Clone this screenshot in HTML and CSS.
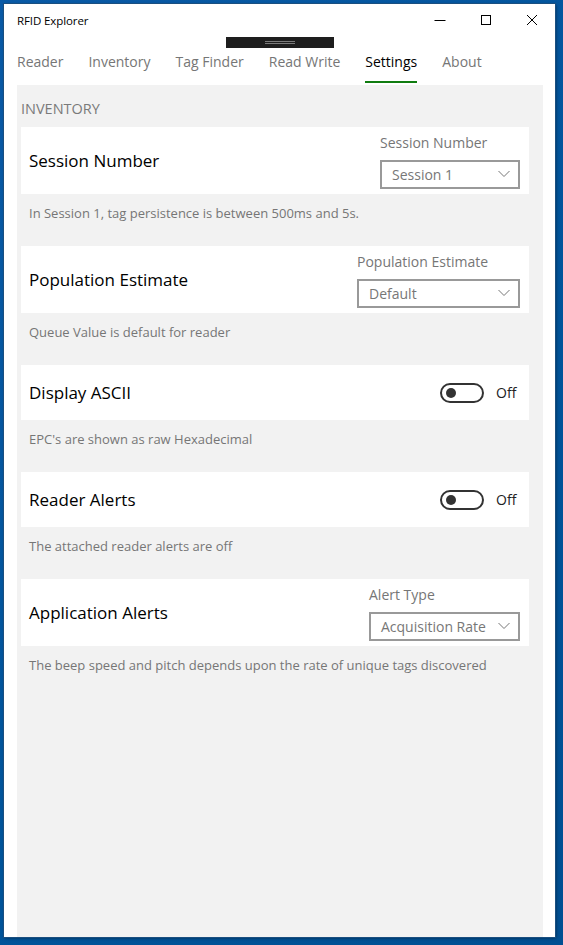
FILE: index.html
```html
<!DOCTYPE html>
<html>
<head>
<meta charset="utf-8">
<link rel="stylesheet" href="styles.css">
</head>
<body>
<div class="window">
  <div class="titlebar">
    <span class="app-title">RFID Explorer</span>
    <div class="caption-buttons">
      <span class="cap-btn"><svg width="12" height="12" viewBox="0 0 12 12"><path d="M0.5 6.5H11.5" stroke="#000" stroke-width="1"/></svg></span>
      <span class="cap-btn"><svg width="12" height="12" viewBox="0 0 12 12"><rect x="1.5" y="1.5" width="9" height="9" fill="none" stroke="#000" stroke-width="1"/></svg></span>
      <span class="cap-btn"><svg width="12" height="12" viewBox="0 0 12 12"><path d="M1 1L11 11M11 1L1 11" stroke="#000" stroke-width="1"/></svg></span>
    </div>
  </div>
  <div class="drag-handle"><span class="grip"></span></div>
  <nav class="tabs">
    <span class="tab">Reader</span>
    <span class="tab">Inventory</span>
    <span class="tab">Tag Finder</span>
    <span class="tab">Read Write</span>
    <span class="tab active">Settings</span>
    <span class="tab">About</span>
  </nav>
  <main class="panel">
    <div class="section-header">INVENTORY</div>

    <div class="card tall">
      <div class="card-title">Session Number</div>
      <div class="field">
        <div class="field-label">Session Number</div>
        <div class="combo w140"><span>Session 1</span><svg class="chev" width="12" height="8" viewBox="0 0 12 8"><path d="M0.5 1L6 6.5L11.5 1" fill="none" stroke="#777" stroke-width="1"/></svg></div>
      </div>
    </div>
    <div class="desc">In Session 1, tag persistence is between 500ms and 5s.</div>

    <div class="card tall">
      <div class="card-title">Population Estimate</div>
      <div class="field">
        <div class="field-label">Population Estimate</div>
        <div class="combo w163"><span>Default</span><svg class="chev" width="12" height="8" viewBox="0 0 12 8"><path d="M0.5 1L6 6.5L11.5 1" fill="none" stroke="#777" stroke-width="1"/></svg></div>
      </div>
    </div>
    <div class="desc">Queue Value is default for reader</div>

    <div class="card">
      <div class="card-title">Display ASCII</div>
      <div class="toggle-wrap"><span class="toggle"><span class="knob"></span></span><span class="toggle-text">Off</span></div>
    </div>
    <div class="desc">EPC's are shown as raw Hexadecimal</div>

    <div class="card">
      <div class="card-title">Reader Alerts</div>
      <div class="toggle-wrap"><span class="toggle"><span class="knob"></span></span><span class="toggle-text">Off</span></div>
    </div>
    <div class="desc">The attached reader alerts are off</div>

    <div class="card tall">
      <div class="card-title">Application Alerts</div>
      <div class="field">
        <div class="field-label">Alert Type</div>
        <div class="combo w151"><span>Acquisition Rate</span><svg class="chev" width="12" height="8" viewBox="0 0 12 8"><path d="M0.5 1L6 6.5L11.5 1" fill="none" stroke="#777" stroke-width="1"/></svg></div>
      </div>
    </div>
    <div class="desc">The beep speed and pitch depends upon the rate of unique tags discovered</div>
  </main>
</div>
</body>
</html>
```
FILE: styles.css
```css
html, body {
  margin: 0;
  padding: 0;
}
body {
  width: 563px;
  height: 945px;
  background: linear-gradient(135deg, #0a5aa6 0%, #00549a 60%, #004f92 100%);
  font-family: "Open Sans", "Noto Sans", sans-serif;
  overflow: hidden;
  padding-top: 4px;
  padding-left: 4px;
  box-sizing: border-box;
}
.window {
  position: relative;
  width: 551px;
  height: 933px;
  background: #fff;
  box-shadow: 0 0 0 1px #1a4f80, 1px 1px 3px rgba(0,0,0,0.5);
  display: flex;
  flex-direction: column;
}
.titlebar {
  height: 32px;
  display: flex;
  align-items: center;
  justify-content: space-between;
  padding-left: 13px;
}
.app-title {
  font-size: 11.5px;
  color: #000;
  letter-spacing: -0.1px;
}
.caption-buttons {
  display: flex;
  height: 32px;
}
.cap-btn {
  width: 46px;
  height: 32px;
  display: flex;
  align-items: center;
  justify-content: center;
}
.drag-handle {
  position: absolute;
  left: 222px;
  top: 33px;
  width: 108px;
  height: 11px;
  background: #1e1e1e;
  display: flex;
  align-items: center;
  justify-content: center;
}
.grip {
  width: 30px;
  height: 3px;
  border-top: 1px solid #7a7a7a;
  border-bottom: 1px solid #7a7a7a;
  box-sizing: border-box;
}
.tabs {
  display: flex;
  gap: 25px;
  padding-left: 13px;
  height: 49px;
  align-items: flex-start;
  padding-top: 16px;
  box-sizing: border-box;
}
.tab {
  font-size: 14px;
  color: #767676;
  line-height: 20px;
  padding-bottom: 9px;
  border-bottom: 2px solid transparent;
}
.tab.active {
  color: #000;
  border-bottom-color: #107c10;
}
.panel {
  flex: 1;
  margin-left: 13px;
  margin-right: 12px;
  background: #f2f2f2;
  padding: 14px 14px 0 4px;
}
.section-header {
  font-size: 14.5px;
  color: #7a7a7a;
  line-height: 20px;
  margin-bottom: 8px;
}
.card {
  background: #fff;
  height: 55px;
  display: flex;
  align-items: center;
  justify-content: space-between;
  padding: 0 9px 0 8px;
}
.card.tall {
  height: 67px;
}
.card-title {
  font-size: 17px;
  color: #000;
}
.field {
  display: flex;
  flex-direction: column;
  align-items: flex-start;
}
.field-label {
  font-size: 14px;
  color: #767676;
  line-height: 19px;
  margin-bottom: 8px;
}
.combo {
  height: 29px;
  border: 2px solid #999;
  box-sizing: border-box;
  display: flex;
  align-items: center;
  justify-content: space-between;
  padding: 0 8px 0 10px;
  font-size: 14px;
  color: #777;
}
.w140 { width: 140px; }
.w163 { width: 163px; }
.w151 { width: 151px; }
.chev {
  display: block;
}
.desc {
  font-size: 13px;
  color: #767676;
  line-height: 18px;
  padding: 10px 0 0 8px;
  margin-bottom: 24px;
}
.toggle-wrap {
  display: flex;
  align-items: center;
  gap: 12px;
  padding-right: 2px;
}
.toggle {
  width: 44px;
  height: 20px;
  border: 2px solid #333;
  border-radius: 10px;
  box-sizing: border-box;
  display: flex;
  align-items: center;
  padding-left: 4px;
}
.knob {
  width: 10px;
  height: 10px;
  border-radius: 50%;
  background: #333;
}
.toggle-text {
  font-size: 14px;
  color: #222;
  width: 22px;
}
```
